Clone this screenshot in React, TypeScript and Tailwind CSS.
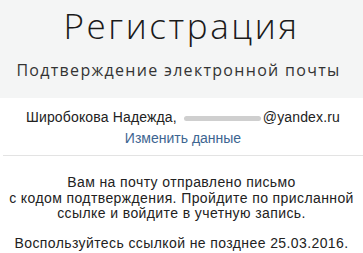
import React from 'react';

export default function App() {
  return (
    <div className="w-[363px] h-[253px] bg-white overflow-hidden font-['Liberation_Sans',Arial,sans-serif]">
      {/* шапка */}
      <div className="h-[98px] bg-[#f4f5f5] flex flex-col items-center">
        <h1 className="mt-[5px] text-[35px] leading-[42px] font-light text-[#1a1a1a] font-['Open_Sans',sans-serif] tracking-[2.6px]">
          Регистрация
        </h1>
        <p className="mt-[12px] mr-[6px] text-[16px] leading-[22px] text-[#333] font-['Open_Sans',sans-serif] tracking-[1.3px]">
          Подтверждение электронной почты
        </p>
      </div>

      {/* данные пользователя */}
      <div className="ml-[3px] pt-[11px] pb-[9px] flex flex-col items-center text-[14px] leading-[16px] text-[#222] border-b border-[#e3e3e3]">
        <div className="flex items-center tracking-[0.15px]">
          <span>Широбокова Надежда,</span>
          <span className="ml-[7px] mr-[2px] mt-[2px] w-[77px] h-[5px] rounded-full bg-[#cfcfcf]" />
          <span>@yandex.ru</span>
        </div>
        <a href="#" className="mt-[5px] text-[#3d6591]">Изменить данные</a>
      </div>

      {/* сообщение */}
      <div className="pt-[19px] text-center text-[14px] leading-[15.5px] text-[#222] tracking-[0.4px]">
        <p>
          Вам на почту отправлено письмо
          <br />
          с кодом подтверждения. Пройдите по присланной
          <br />
          ссылке и войдите в учетную запись.
        </p>
        <p className="mt-[14px]">Воспользуйтесь ссылкой не позднее 25.03.2016.</p>
      </div>
    </div>
  );
}
